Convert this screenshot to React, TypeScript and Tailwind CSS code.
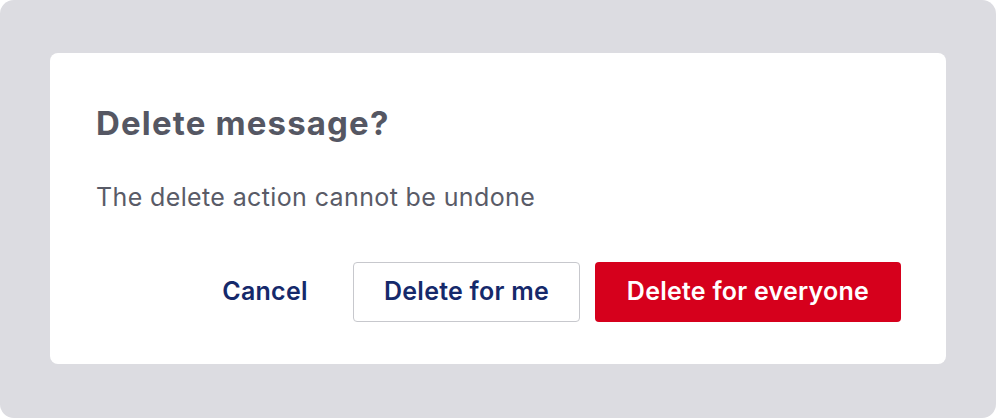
export default function App() {
  return (
    <div className="h-[418px] w-[996px] bg-white font-['Inter','Noto_Sans',sans-serif]">
      <div className="flex h-full w-full items-start rounded-[14px] bg-[#dcdce1] px-[50px] pt-[53px]">
        <div className="flex h-[311px] w-full flex-col rounded-[8px] bg-white pl-[46px] pr-[45px] pt-[50px]">
          <h2 className="text-[33px] font-bold leading-[40px] tracking-[0.035em] text-[#555763]">
            Delete message?
          </h2>
          <p className="mt-[38px] text-[25px] leading-[32px] tracking-[0.015em] text-[#595b67]">
            The delete action cannot be undone
          </p>
          <div className="mt-[49px] flex justify-end gap-[15px]">
            <button
              type="button"
              className="h-[60px] w-[146px] text-[25px] font-semibold tracking-[0.01em] text-[#15296b]"
            >
              Cancel
            </button>
            <button
              type="button"
              className="h-[60px] w-[227px] rounded-[4px] border border-[#c7c8cd] bg-white text-[25px] font-semibold tracking-[0.01em] text-[#15296b]"
            >
              Delete for me
            </button>
            <button
              type="button"
              className="h-[60px] w-[306px] rounded-[4px] bg-[#d6001c] text-[25px] font-semibold tracking-[0.01em] text-white"
            >
              Delete for everyone
            </button>
          </div>
        </div>
      </div>
    </div>
  );
}
